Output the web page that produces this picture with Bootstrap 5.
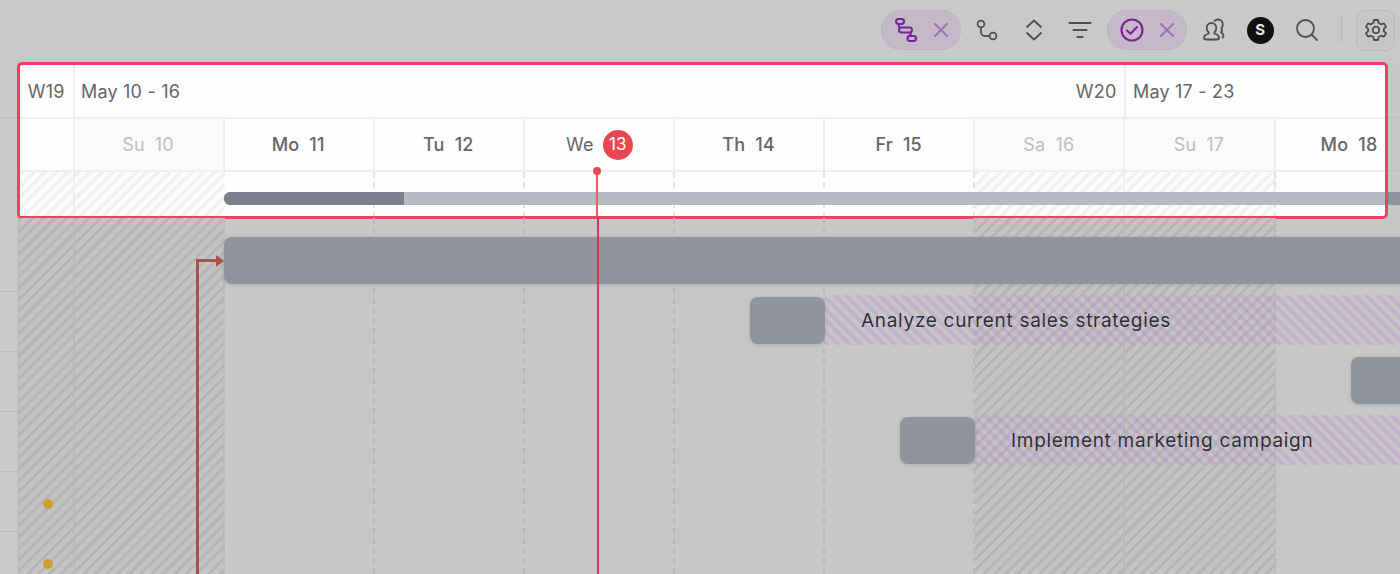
<!DOCTYPE html>
<html lang="en">
<head>
  <meta charset="UTF-8">
  <meta name="viewport" content="width=device-width, initial-scale=1">
  <title>Gantt</title>
  <link href="https://cdn.jsdelivr.net/npm/bootstrap@5.3.0/dist/css/bootstrap.min.css" rel="stylesheet">
  <style>
    html, body { height: 100%; overflow: hidden; background: #c7c7c7; }
    body { font-family: Inter, "Liberation Sans", sans-serif; }
    .stage { width: 1400px; height: 574px; overflow: hidden; }

    /* toolbar */
    .tool-bar { height: 63px; background: #c9c9c9; padding-right: 5px; padding-bottom: 3px; }
    .tool-slot { width: 46.5px; height: 40px; }
    .tool-pill { width: 80px; height: 40px; margin: 0 3.5px; border-radius: 20px; background: #c3b9c8; border: 1px solid #bfafc8; padding: 0 11px 0 12px; }
    .tool-sep { width: 1px; height: 26px; background: #b6b6b6; margin: 0 14px 0 11px; }
    .tool-gear { width: 39px; height: 41px; border: 1px solid #b9b9b9; border-radius: 9px; background: #c7c7c7; }
    .tool-avatar { width: 27px; height: 27px; border-radius: 50%; background: #111; color: #e8e8e8; font-size: 15px; font-weight: 700; }
    .ico { fill: none; stroke: #4f4f4f; stroke-width: 1.8; stroke-linecap: round; stroke-linejoin: round; }
    .ico-purple { stroke: #7d219c; stroke-width: 2.1; }
    .ico-x { stroke: #a36fb5; stroke-width: 2; }

    /* highlighted header */
    .head-wrap { height: 155px; }
    .edge-left { width: 17px; background: linear-gradient(#bcbcbc, #bcbcbc) 0 54px / 100% 1px no-repeat, #c9c9c9; }
    .edge-right { width: 12px; background:
      linear-gradient(#8f939b, #8f939b) 0 129px / 100% 13px no-repeat,
      linear-gradient(#bcbcbc, #bcbcbc) 0 54px / 100% 1px no-repeat,
      linear-gradient(#bcbcbc, #bcbcbc) 0 107px / 100% 1px no-repeat, #c6c6c6; }
    .head-box { width: 1371px; margin: -1px 0; border: 3px solid #f53d65; border-radius: 5px; background: #fdfdfd; overflow: hidden; position: relative; }
    .head-row { height: 53px; border-bottom: 2px solid #eeeeee; color: #666; font-size: 18px; letter-spacing: .2px; white-space: nowrap; }
    .week-row { height: 54px; }
    .cell-wk { width: 54.5px; flex: none; border-right: 2px solid #eeeeee; }
    .cell-range { width: 1051px; flex: none; padding: 0 7px 0 6.5px; border-right: 2px solid #eeeeee; }
    .cell-next { padding-left: 7.5px; }
    .cell-day { width: 150.14px; flex: none; border-right: 2px solid #eeeeee; padding-right: 1px; font-weight: 450; gap: 10px; }
    .cell-off { background: #fafafa; color: #bdbdbd; font-weight: 400; }
    .today-badge { width: 30px; height: 30px; border-radius: 50%; background: #e9464f; color: #fff; font-size: 17px; font-weight: 400; letter-spacing: 0; margin-right: -14px; }
    .cell-today { gap: 9px; padding-right: 13px; font-weight: 400; }
    .lane-row { height: 44px; }
    .lane-col { width: 150.14px; flex: none; }
    .lane-dash { background: linear-gradient(#e4e4e4 60%, transparent 60%) right top / 2px 10px repeat-y; }
    .hatch-light { flex: none; background: repeating-linear-gradient(135deg, #f0f0f0 0 3.5px, #fbfbfb 3.5px 8px); }
    .progress-track { left: 204px; right: -4px; top: 20px; height: 13px; background: #b6bac4; border-radius: 6px 0 0 6px; overflow: hidden; }
    .progress-done { width: 180px; height: 100%; background: #7b808c; }
    .today-head { left: 576px; top: -1px; bottom: 0; width: 2px; background: #ee5b68; }
    .today-dot { left: -3px; top: -4px; width: 8px; height: 8px; border-radius: 50%; background: #e9464f; }

    /* chart body */
    .chart { height: 356px; }
    .gutter { width: 19px; flex: none; background: repeating-linear-gradient(#c9c9c9 0 59px, #bcbcbc 59px 60px) 0 14px; border-right: 1.5px solid #b8b8b8; }
    .hatch-dark { background: repeating-linear-gradient(135deg, #b6b6b6 0 3px, #c4c4c4 3px 8px); }
    .body-wk { width: 55.5px; flex: none; border-right: 2px solid #bababa; }
    .body-col { width: 150.14px; flex: none; }
    .body-dash { background: linear-gradient(#bababa 60%, transparent 60%) right top / 2px 10px repeat-y; }
    .body-solid { border-right: 2px solid #bababa; }
    .wk-block { flex: none; }
    .task-bar { height: 47px; background: #90949c; border-radius: 8px; box-shadow: 0 1px 4px rgba(0, 0, 0, .13); }
    .task-trail { height: 50px; background: repeating-linear-gradient(45deg, rgba(190, 130, 220, .3) 0 4px, transparent 4px 8px); color: #2d2f33; font-size: 19px; letter-spacing: .7px; padding: 3px 0 0 36px; white-space: nowrap; text-shadow: 0 0 2px rgba(255, 255, 255, .35); }
    .dep-line { background: #a95050; }
    .dep-head { width: 0; height: 0; border-left: 8px solid #a95050; border-top: 6px solid transparent; border-bottom: 6px solid transparent; }
    .today-body { left: 597px; top: 0; bottom: 0; width: 2px; background: #b9434f; }
    .warn-dot { left: 43px; width: 10px; height: 10px; border-radius: 50%; background: #cf9e2c; }
  </style>
</head>
<body>

<div class="stage">
  <div class="tool-bar d-flex justify-content-end align-items-center">
    <div class="tool-pill d-flex justify-content-between align-items-center">
      <svg class="ico ico-purple" width="24" height="26" viewBox="0 0 24 26"><rect x="2" y="2" width="8" height="5" rx="2.400"/><rect x="5" y="10.500" width="13" height="5" rx="2.400"/><rect x="13.500" y="19" width="8.500" height="5" rx="2.400"/><path d="M4.500 7c0 1.500 0 2.500 1.500 3.500M17 15.500c0 1.500-.5 2.500-2 3.500"/></svg>
      <svg class="ico ico-x" width="16" height="16" viewBox="0 0 16 16"><path d="M2 2l12 12M14 2L2 14"/></svg>
    </div>
    <div class="tool-slot d-flex justify-content-center align-items-center">
      <svg class="ico" width="22" height="22" viewBox="0 0 22 22"><circle cx="5" cy="5" r="3.400"/><circle cx="17" cy="17" r="3.400"/><path d="M5 8.400v4.600a4 4 0 0 0 4 4h4.600"/></svg>
    </div>
    <div class="tool-slot d-flex justify-content-center align-items-center">
      <svg class="ico" width="18" height="22" viewBox="0 0 18 22"><path d="M2 8l7-6.500 7 6.500M2 14l7 6.500 7-6.500"/></svg>
    </div>
    <div class="tool-slot d-flex justify-content-center align-items-center">
      <svg class="ico" width="24" height="20" viewBox="0 0 24 20"><path d="M1.500 3h21M5.500 10h13M9.500 17h5"/></svg>
    </div>
    <div class="tool-pill d-flex justify-content-between align-items-center">
      <svg class="ico ico-purple" width="24" height="24" viewBox="0 0 24 24"><circle cx="12" cy="12" r="10.500"/><path d="M7 12.500l3.500 3.200L17 9"/></svg>
      <svg class="ico ico-x" width="16" height="16" viewBox="0 0 16 16"><path d="M2 2l12 12M14 2L2 14"/></svg>
    </div>
    <div class="tool-slot d-flex justify-content-center align-items-center">
      <svg class="ico" width="24" height="24" viewBox="0 0 24 24"><path d="M9.500 5c2.800 0 4.800 2.200 4.800 5 0 2-.8 3.500-2 4.500v1c2.500 .8 4.700 1.800 4.700 4 0 1.200-.8 2-2 2H4c-1.200 0-2-.8-2-2 0-2.200 2.200-3.200 4.700-4v-1c-1.200-1-2-2.500-2-4.500C4.700 7.200 6.700 5 9.500 5zM12.500 2.800C13.500 1.800 14.800 1.500 16 1.500c2.800 0 4.800 2.200 4.800 5 0 1.600-.6 2.800-1.500 3.800 1 1.600 1 3-.3 4 1.300.8 2.500 1.800 2.500 3.500 0 .8-.4 1.500-1 1.700"/></svg>
    </div>
    <div class="tool-slot d-flex justify-content-center align-items-center">
      <div class="tool-avatar d-flex justify-content-center align-items-center">S</div>
    </div>
    <div class="tool-slot d-flex justify-content-center align-items-center">
      <svg class="ico" width="24" height="24" viewBox="0 0 24 24"><circle cx="10.500" cy="10.500" r="8.500"/><path d="M17 17l5 5"/></svg>
    </div>
    <div class="tool-sep"></div>
    <div class="tool-gear d-flex justify-content-center align-items-center">
      <svg class="ico" width="24" height="24" viewBox="0 0 24 24"><circle cx="12" cy="12" r="3.300"/><path d="M10 2h4l.7 3 2.300 1.300 3-.9 2 3.400-2.200 2.200v2l2.200 2.200-2 3.400-3-.9L14.700 19l-.7 3h-4l-.7-3L7 17.700l-3 .9-2-3.400L4.200 13v-2L2 8.800l2-3.400 3 .9L9.300 5z"/></svg>
    </div>
  </div>

  <div class="head-wrap d-flex">
    <div class="edge-left"></div>
    <div class="head-box">
      <div class="head-row week-row d-flex">
        <div class="cell-wk d-flex justify-content-center align-items-center">W19</div>
        <div class="cell-range d-flex justify-content-between align-items-center"><span>May 10 - 16</span><span>W20</span></div>
        <div class="cell-next d-flex align-items-center">May 17 - 23</div>
      </div>
      <div class="head-row d-flex">
        <div class="cell-wk"></div>
        <div class="cell-day cell-off d-flex justify-content-center align-items-center"><span>Su</span><span>10</span></div>
        <div class="cell-day d-flex justify-content-center align-items-center"><span>Mo</span><span>11</span></div>
        <div class="cell-day d-flex justify-content-center align-items-center"><span>Tu</span><span>12</span></div>
        <div class="cell-day cell-today d-flex justify-content-center align-items-center"><span>We</span><span class="today-badge d-flex justify-content-center align-items-center">13</span></div>
        <div class="cell-day d-flex justify-content-center align-items-center"><span>Th</span><span>14</span></div>
        <div class="cell-day d-flex justify-content-center align-items-center"><span>Fr</span><span>15</span></div>
        <div class="cell-day cell-off d-flex justify-content-center align-items-center"><span>Sa</span><span>16</span></div>
        <div class="cell-day cell-off d-flex justify-content-center align-items-center"><span>Su</span><span>17</span></div>
        <div class="cell-day d-flex justify-content-center align-items-center"><span>Mo</span><span>18</span></div>
      </div>
      <div class="lane-row d-flex position-relative">
        <div class="d-flex hatch-light">
          <div class="cell-wk"></div>
          <div class="lane-col"></div>
        </div>
        <div class="lane-col lane-dash"></div>
        <div class="lane-col lane-dash"></div>
        <div class="lane-col lane-dash"></div>
        <div class="lane-col lane-dash"></div>
        <div class="lane-col lane-dash"></div>
        <div class="d-flex hatch-light">
          <div class="lane-col cell-day"></div>
          <div class="lane-col lane-dash"></div>
        </div>
        <div class="lane-col"></div>
        <div class="progress-track position-absolute"><div class="progress-done"></div></div>
        <div class="today-head position-absolute"><div class="today-dot position-absolute"></div></div>
      </div>
    </div>
    <div class="edge-right"></div>
  </div>

  <div class="chart d-flex position-relative">
    <div class="gutter"></div>
    <div class="wk-block d-flex hatch-dark">
      <div class="body-wk"></div>
      <div class="body-col body-dash"></div>
    </div>
    <div class="body-col body-dash"></div>
    <div class="body-col body-dash"></div>
    <div class="body-col body-dash"></div>
    <div class="body-col body-dash"></div>
    <div class="body-col body-dash"></div>
    <div class="wk-block d-flex hatch-dark">
      <div class="body-col body-solid"></div>
      <div class="body-col body-dash"></div>
    </div>
    <div class="body-col"></div>

    <!-- tasks sit on the chart canvas -->
    <div class="task-bar position-absolute" style="left: 224px; right: -20px; top: 19px;"></div>
    <div class="task-trail d-flex align-items-center position-absolute" style="left: 825px; right: 0; top: 77px;">Analyze current sales strategies</div>
    <div class="task-bar position-absolute" style="left: 750px; width: 75px; top: 79px;"></div>
    <div class="task-bar position-absolute" style="left: 1351px; right: -20px; top: 139px;"></div>
    <div class="task-trail d-flex align-items-center position-absolute" style="left: 975px; right: 0; top: 197px;">Implement marketing campaign</div>
    <div class="task-bar position-absolute" style="left: 900px; width: 75px; top: 199px;"></div>
    <div class="today-body position-absolute"></div>

    <div class="dep-line position-absolute" style="left: 196px; top: 41px; width: 3px; bottom: 0;"></div>
    <div class="dep-line position-absolute" style="left: 196px; top: 41px; width: 22px; height: 3px;"></div>
    <div class="dep-head position-absolute" style="left: 216px; top: 36.500px;"></div>
    <div class="warn-dot position-absolute" style="top: 281px;"></div>
    <div class="warn-dot position-absolute" style="top: 341px;"></div>
  </div>
</div>

<script src="https://cdn.jsdelivr.net/npm/bootstrap@5.3.0/dist/js/bootstrap.bundle.min.js"></script>
</body>
</html>
